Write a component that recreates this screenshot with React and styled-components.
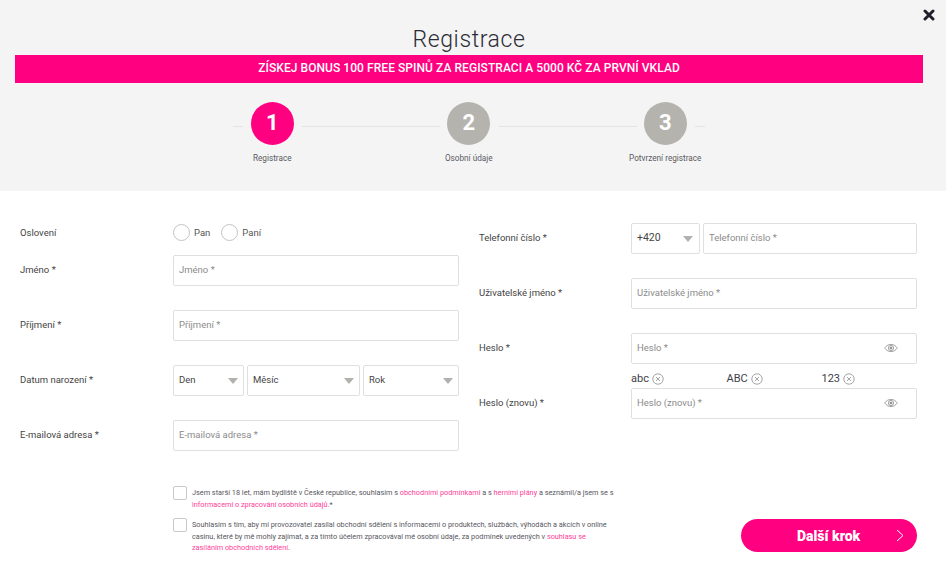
import React from "react";
import styled, { createGlobalStyle } from "styled-components";

const Global = createGlobalStyle`
    * { box-sizing: border-box; }
    html, body { margin: 0; padding: 0; background: #fff; }
    body { font-family: Roboto, "Liberation Sans", sans-serif; color: #444; }
    input::placeholder { color: #8b8b8b; opacity: 1; }
`;

const Page = styled.div`
    width: 946px;
    height: 579px;
    overflow: hidden;
    position: relative;
`;

const Header = styled.header`
    height: 191px;
    background: #f4f4f4;
    padding: 25px 23px 0 15px;
`;

const Title = styled.h1`
    margin: 0;
    height: 30px;
    font-size: 23px;
    line-height: 30px;
    font-weight: 300;
    letter-spacing: 0.6px;
    text-align: center;
    color: #2c2c36;
`;

const Close = styled.button`
    position: absolute;
    top: 8px;
    right: 11px;
    width: 12px;
    height: 14px;
    padding: 0;
    border: 0;
    background: none;
    display: flex;
    align-items: center;
    color: #20202c;
`;

const Banner = styled.div`
    height: 28px;
    background: #ff0080;
    color: #fff;
    font-size: 12px;
    font-weight: 500;
    letter-spacing: 0.06px;
    line-height: 27px;
    text-align: center;
`;

const Steps = styled.ol`
    list-style: none;
    margin: 19px 0 0 159px;
    padding: 0;
    display: flex;
`;

const Step = styled.li`
    width: 196.5px;
    display: flex;
    flex-direction: column;
    align-items: center;
    position: relative;
    &::before {
        content: "";
        position: absolute;
        top: 24px;
        left: 59px;
        width: 10px;
        height: 1px;
        background: #e4e4e4;
        display: ${({ $first }) => ($first ? "block" : "none")};
    }
    &::after {
        content: "";
        position: absolute;
        top: 24px;
        left: 128px;
        width: ${({ $last }) => ($last ? "10px" : "138px")};
        height: 1px;
        background: #e4e4e4;
    }
`;

const Circle = styled.span`
    width: 43px;
    height: 43px;
    border-radius: 50%;
    background: ${({ $active }) => ($active ? "#ff0080" : "#b5b3ad")};
    color: #fff;
    font-size: 22px;
    font-weight: 700;
    line-height: 42px;
    text-align: center;
`;

const StepLabel = styled.span`
    margin-top: 8px;
    font-size: 8.2px;
    line-height: 11px;
    color: #5a5a62;
    white-space: nowrap;
`;

const Columns = styled.section`
    display: grid;
    grid-template-columns: 439px 438px;
    column-gap: 20px;
    padding: 32px 0 0 20px;
`;

const Column = styled.div`
    display: flex;
    flex-direction: column;
`;

const Row = styled.div`
    display: grid;
    grid-template-columns: ${({ $wide }) => ($wide ? "152px" : "153px")} 1fr;
    align-items: center;
    height: ${({ $h }) => $h || 31}px;
    margin-bottom: ${({ $mb }) => ($mb === undefined ? 24 : $mb)}px;
`;

const Label = styled.label`
    font-size: 9.5px;
    color: #444;
    white-space: nowrap;
    position: relative;
    top: ${({ $flat }) => ($flat ? "0" : "-1px")};
`;

const Radios = styled.div`
    display: flex;
    align-items: center;
    font-size: 9.5px;
    color: #555;
`;

const Radio = styled.span`
    width: 17px;
    height: 17px;
    border: 1px solid #c4c4c4;
    border-radius: 50%;
    background: #fff;
    margin-right: 4px;
`;

const RadioText = styled.span`
    margin-right: 11px;
`;

const InputBox = styled.div`
    position: relative;
    height: 31px;
    width: 100%;
`;

const Input = styled.input`
    display: block;
    width: 100%;
    height: 100%;
    padding: 0 5px 2px;
    border: 1px solid #dfdfdf;
    border-radius: 2px;
    background: #fff;
    font-family: inherit;
    font-size: 9.5px;
    outline: none;
`;

const Eye = styled.span`
    position: absolute;
    top: 10px;
    right: 19px;
    display: flex;
    color: #8a8a8a;
`;

const Selects = styled.div`
    display: flex;
    gap: 3px;
    height: 31px;
`;

const Select = styled.div`
    flex: 0 0 ${({ $w }) => $w}px;
    display: flex;
    align-items: center;
    justify-content: space-between;
    padding: 0 ${({ $pr }) => $pr || 5}px 2px 5px;
    border: 1px solid #dfdfdf;
    border-radius: 2px;
    font-size: ${({ $big }) => ($big ? "10.5px" : "9.5px")};
    color: #444;
    &::after {
        content: "";
        width: 0;
        height: 0;
        margin-top: 2px;
        border-left: 5.5px solid transparent;
        border-right: 5.5px solid transparent;
        border-top: 6px solid #b1b1ae;
    }
`;

const Rules = styled.div`
    display: grid;
    grid-template-columns: 95.5px 95px auto;
    height: 24px;
    margin: -24px 0 0 152px;
    padding-top: 5px;
    font-size: 11px;
    line-height: 14px;
    color: #3e3e48;
`;

const Rule = styled.span`
    display: flex;
    align-items: center;
    gap: 3px;
    svg { color: #8e8e8e; }
`;

const Bottom = styled.section`
    display: flex;
    align-items: flex-start;
    padding: 0 29px 0 173px;
    margin-top: 11px;
`;

const Consents = styled.div`
    width: 442px;
    display: flex;
    flex-direction: column;
    gap: 8px;
`;

const Consent = styled.div`
    display: flex;
    gap: 5px;
    font-size: 7.3px;
    line-height: 11.5px;
    color: #575760;
`;

const ConsentText = styled.span`
    padding-top: 1px;
`;

const Check = styled.span`
    flex: 0 0 14px;
    height: 14px;
    border: 1px solid #c9c9c9;
    border-radius: 2px;
    background: #fff;
`;

const Link = styled.a`
    color: #ff3d9a;
`;

const NextButton = styled.button`
    margin: 33px 0 0 126px;
    flex: 0 0 176px;
    height: 33px;
    border: 0;
    border-radius: 17px;
    background: #ff0080;
    color: #fff;
    font-family: inherit;
    font-size: 14px;
    font-weight: 900;
    display: flex;
    align-items: center;
    justify-content: space-between;
    padding: 0 13px 0 56px;
`;

const XIcon = () => (
    <svg width="12" height="12" viewBox="0 0 12 12">
        <path d="M2 2l8 8M10 2l-8 8" stroke="currentColor" strokeWidth="3" strokeLinecap="round" />
    </svg>
);

const EyeIcon = () => (
    <svg width="14" height="10" viewBox="0 0 14 10" fill="none" stroke="currentColor" strokeWidth="0.8">
        <path d="M.7 5C2.4 2.6 4.5 1.4 7 1.4S11.6 2.6 13.3 5C11.6 7.4 9.5 8.6 7 8.6S2.4 7.4.7 5z" />
        <circle cx="7" cy="5" r="2.6" />
        <circle cx="7" cy="5" r="1" fill="currentColor" />
    </svg>
);

const CrossCircle = () => (
    <svg width="12" height="12" viewBox="0 0 12 12" fill="none" stroke="currentColor" strokeWidth="0.8">
        <circle cx="6" cy="6" r="5.2" />
        <path d="M4 4l4 4M8 4l-4 4" />
    </svg>
);

const Chevron = () => (
    <svg width="8" height="13" viewBox="0 0 8 13" fill="none" stroke="currentColor" strokeWidth="1">
        <path d="M1 1l6 5.5L1 12" />
    </svg>
);

const steps = ["Registrace", "Osobní údaje", "Potvrzení registrace"];

const Field = ({ label, wide }) => (
    <Row $wide={wide}>
        <Label>{label}</Label>
        <InputBox>
            <Input placeholder={label} />
        </InputBox>
    </Row>
);

const PasswordField = ({ label, mb }) => (
    <Row $wide $mb={mb}>
        <Label>{label}</Label>
        <InputBox>
            <Input type="password" placeholder={label} />
            <Eye><EyeIcon /></Eye>
        </InputBox>
    </Row>
);

export default function App() {
    return (
        <Page>
            <Global />
            <Header>
                <Close aria-label="Zavřít"><XIcon /></Close>
                <Title>Registrace</Title>
                <Banner>ZÍSKEJ BONUS 100 FREE SPINŮ ZA REGISTRACI A 5000 KČ ZA PRVNÍ VKLAD</Banner>
                <Steps>
                    {steps.map((s, i) => (
                        <Step key={s} $first={i === 0} $last={i === 2}>
                            <Circle $active={i === 0}>{i + 1}</Circle>
                            <StepLabel>{s}</StepLabel>
                        </Step>
                    ))}
                </Steps>
            </Header>
            <Columns>
                <Column>
                    <Row $h={19} $mb={13}>
                        <Label $flat>Oslovení</Label>
                        <Radios>
                            <Radio /><RadioText>Pan</RadioText>
                            <Radio /><RadioText>Paní</RadioText>
                        </Radios>
                    </Row>
                    <Field label="Jméno *" />
                    <Field label="Příjmení *" />
                    <Row>
                        <Label>Datum narození *</Label>
                        <Selects>
                            <Select $w={71}>Den</Select>
                            <Select $w={113}>Měsíc</Select>
                            <Select $w={96}>Rok</Select>
                        </Selects>
                    </Row>
                    <Field label="E-mailová adresa *" />
                </Column>
                <Column>
                    <Row $wide>
                        <Label>Telefonní číslo *</Label>
                        <Selects>
                            <Select $w={69} $big $pr={6}>+420</Select>
                            <InputBox>
                                <Input placeholder="Telefonní číslo *" />
                            </InputBox>
                        </Selects>
                    </Row>
                    <Field label="Uživatelské jméno *" wide />
                    <PasswordField label="Heslo *" />
                    <Rules>
                        <Rule>abc <CrossCircle /></Rule>
                        <Rule>ABC <CrossCircle /></Rule>
                        <Rule>123 <CrossCircle /></Rule>
                    </Rules>
                    <PasswordField label="Heslo (znovu) *" mb={0} />
                </Column>
            </Columns>
            <Bottom>
                <Consents>
                    <Consent>
                        <Check />
                        <ConsentText>
                            Jsem starší 18 let, mám bydliště v České republice, souhlasím s{" "}
                            <Link>obchodními podmínkami</Link> a s <Link>herními plány</Link> a seznámil/a jsem se s{" "}
                            <Link>informacemi o zpracování osobních údajů</Link>.*
                        </ConsentText>
                    </Consent>
                    <Consent>
                        <Check />
                        <ConsentText>
                            Souhlasím s tím, aby mi provozovatel zasílal obchodní sdělení s informacemi o produktech,
                            službách, výhodách a akcích v online casinu, které by mě mohly zajímat, a za tímto účelem
                            zpracovával mé osobní údaje, za podmínek uvedených v{" "}
                            <Link>souhlasu se zasíláním obchodních sdělení</Link>.
                        </ConsentText>
                    </Consent>
                </Consents>
                <NextButton>
                    Další krok
                    <Chevron />
                </NextButton>
            </Bottom>
        </Page>
    );
}
